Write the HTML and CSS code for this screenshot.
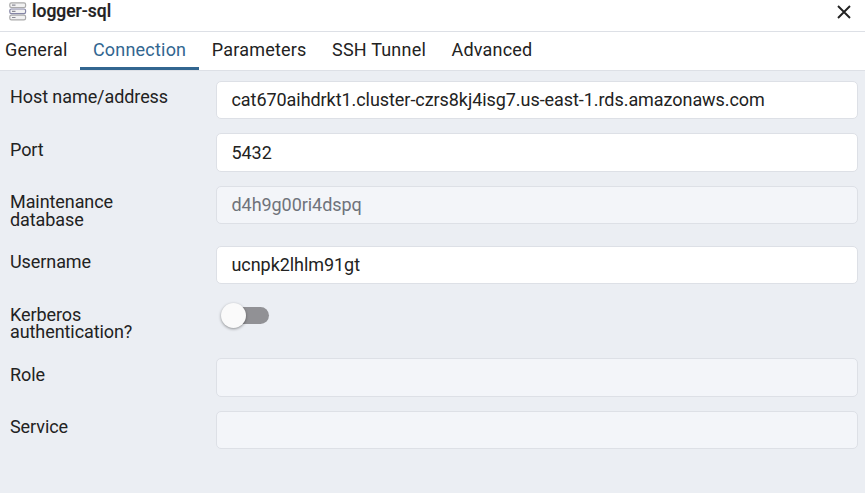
FILE: index.html
```html
<!DOCTYPE html>
<html lang="en">
<head>
<meta charset="utf-8">
<title>logger-sql</title>
<link rel="stylesheet" href="styles.css">
</head>
<body>
<div class="dialog">
  <header class="titlebar">
    <svg class="server-icon" viewBox="0 0 18 20" fill="#f2f2f2" stroke="#aaa" stroke-width="1.2">
      <rect x=".8" y=".8" width="15.8" height="4.7" rx="1.6"/><rect x=".8" y="13.2" width="15.8" height="4.7" rx="1.6"/>
      <rect x=".8" y="7" width="15.8" height="4.7" rx="1.6" stroke="#8586a5"/>
      <path d="M3 3.2h3.5M3 9.4h3.5M3 15.5h3.5" stroke="#8c8c96"/>
    </svg>
    <h1 class="title">logger-sql</h1>
    <button class="close" aria-label="Close"><svg viewBox="0 0 14 14" fill="none" stroke="#222" stroke-width="1.9"><path d="M1 1l12 12M13 1L1 13"/></svg></button>
  </header>
  <nav class="tabs">
    <a class="tab">General</a><a class="tab active">Connection</a><a class="tab">Parameters</a><a class="tab">SSH Tunnel</a><a class="tab">Advanced</a>
  </nav>
  <main class="form">
    <div class="row"><label>Host name/address</label><div class="field">cat670aihdrkt1.cluster-czrs8kj4isg7.us-east-1.rds.amazonaws.com</div></div>
    <div class="row"><label>Port</label><div class="field">5432</div></div>
    <div class="row tall"><label>Maintenance database</label><div class="field disabled">d4h9g00ri4dspq</div></div>
    <div class="row"><label>Username</label><div class="field">ucnpk2lhlm91gt</div></div>
    <div class="row tall"><label>Kerberos authentication?</label><div class="switch"><span class="knob"></span></div></div>
    <div class="row"><label>Role</label><div class="field disabled"></div></div>
    <div class="row"><label>Service</label><div class="field disabled"></div></div>
  </main>
</div>
</body>
</html>
```

FILE: styles.css
```css
* { box-sizing: border-box; }
body { margin: 0; font-family: Roboto, sans-serif; font-size: 18px; color: #222; }
.dialog { height: 493px; display: flex; flex-direction: column; overflow: hidden; background: #fff; }
.titlebar { height: 32px; display: flex; align-items: flex-start; border-bottom: 1px solid #dde0e6; padding: 0 13px 0 9px; }
.server-icon { width: 18px; height: 20px; margin-top: 2px; }
.title { margin: 0 auto 0 5px; font-size: 17.5px; font-weight: 500; line-height: 23px; -webkit-text-stroke: .2px #222; }
.close { width: 16px; height: 16px; margin-top: 4px; padding: 1px; border: 0; background: none; }
.close svg { display: block; width: 14px; height: 14px; }
.tabs { height: 39px; display: flex; border-bottom: 1px solid #dde0e6; }
.tab { height: 38px; padding: 0 12.75px; line-height: 36px; letter-spacing: .2px; }
.tab:first-child { padding-left: 5px; padding-right: 12.6px; }
.active { color: #326690; border-bottom: 3px solid #326690; }
.form { flex: 1; padding: 10px 7px 0 10px; background: #ebeef3; }
.row { display: flex; align-items: flex-start; height: 52.4px; }
.tall { height: 60px; }
.row label { width: 206px; flex: none; padding: 7.36px 60px 0 0; line-height: 17.7px; letter-spacing: -.08px; }
.row:first-child label { padding-right: 0; }
.field { flex: 1; height: 38.4px; padding: .3px 14.5px 0; line-height: 36px; letter-spacing: -.06px; background: #fff; border: 1px solid #dde0e6; border-radius: 5px; }
.disabled { background: #f3f5f9; color: #6f737b; }
.switch { width: 44px; height: 17px; margin: 9px 0 0 9px; border-radius: 9px; background: #919195; position: relative; }
.knob { position: absolute; left: -4px; top: -4px; width: 25px; height: 25px; border-radius: 50%; background: #fafafa; box-shadow: 0 1px 3px rgba(0,0,0,.4); }
```
